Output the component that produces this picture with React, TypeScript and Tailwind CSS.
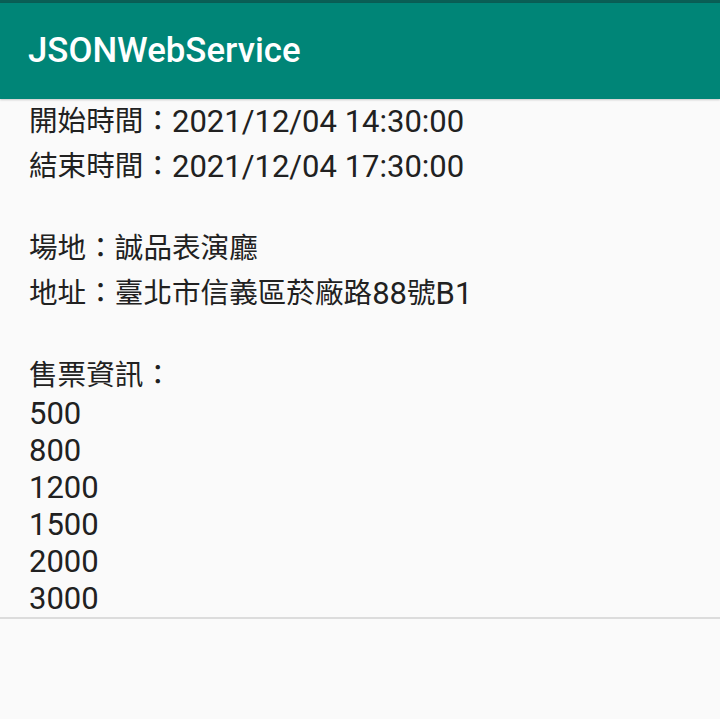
import React from 'react';

const body = "font-['Roboto','Noto_Sans_CJK_TC',sans-serif]";

// Android's CJK fallback renders a touch narrower than the Latin digits
const Rich = ({ text }: { text: string }) => {
  const parts = text.split(/([\u3000-\u9fff\uff00-\uffef]+)/).filter(Boolean);
  return (
    <>
      {parts.map((s, i) =>
        /[\u3000-\u9fff\uff00-\uffef]/.test(s) ? (
          <span key={i} className="text-[28.6px]">{s}</span>
        ) : (
          <span key={i}>{s}</span>
        )
      )}
    </>
  );
};

const Line = ({ text, h }: { text: string; h: string }) => (
  <div className={`flex items-center whitespace-pre ${h}`}>
    <Rich text={text} />
  </div>
);

export default function App() {
  const prices = ['500', '800', '1200', '1500', '2000', '3000'];

  return (
    <div className={`w-[720px] h-[719px] bg-[#fafafa] ${body}`}>
      {/* App bar */}
      <div className="h-[3px] bg-[#0a5e55]" />
      <div className="h-[96px] bg-[#008577] flex items-center pl-[28px] pb-[2px] shadow-[0_1px_2px_rgba(0,0,0,0.2)]">
        <span className="text-white text-[34.8px] font-medium">JSONWebService</span>
      </div>

      {/* Content */}
      <div className="pl-[29px] text-[31px] text-[#212121] leading-none">
        <Line text="開始時間：2021/12/04 14:30:00" h="h-[45px]" />
        <Line text="結束時間：2021/12/04 17:30:00" h="h-[45px]" />
        <div className="h-[37px]" />
        <Line text="場地：誠品表演廳" h="h-[45px]" />
        <Line text="地址：臺北市信義區菸廠路88號B1" h="h-[45px]" />
        <div className="h-[39px]" />
        <Line text="售票資訊：" h="h-[40px]" />
        {prices.map((p) => (
          <Line key={p} text={p} h="h-[37px]" />
        ))}
      </div>
      <div className="h-[2px] bg-[#dcdcdc]" />
    </div>
  );
}
